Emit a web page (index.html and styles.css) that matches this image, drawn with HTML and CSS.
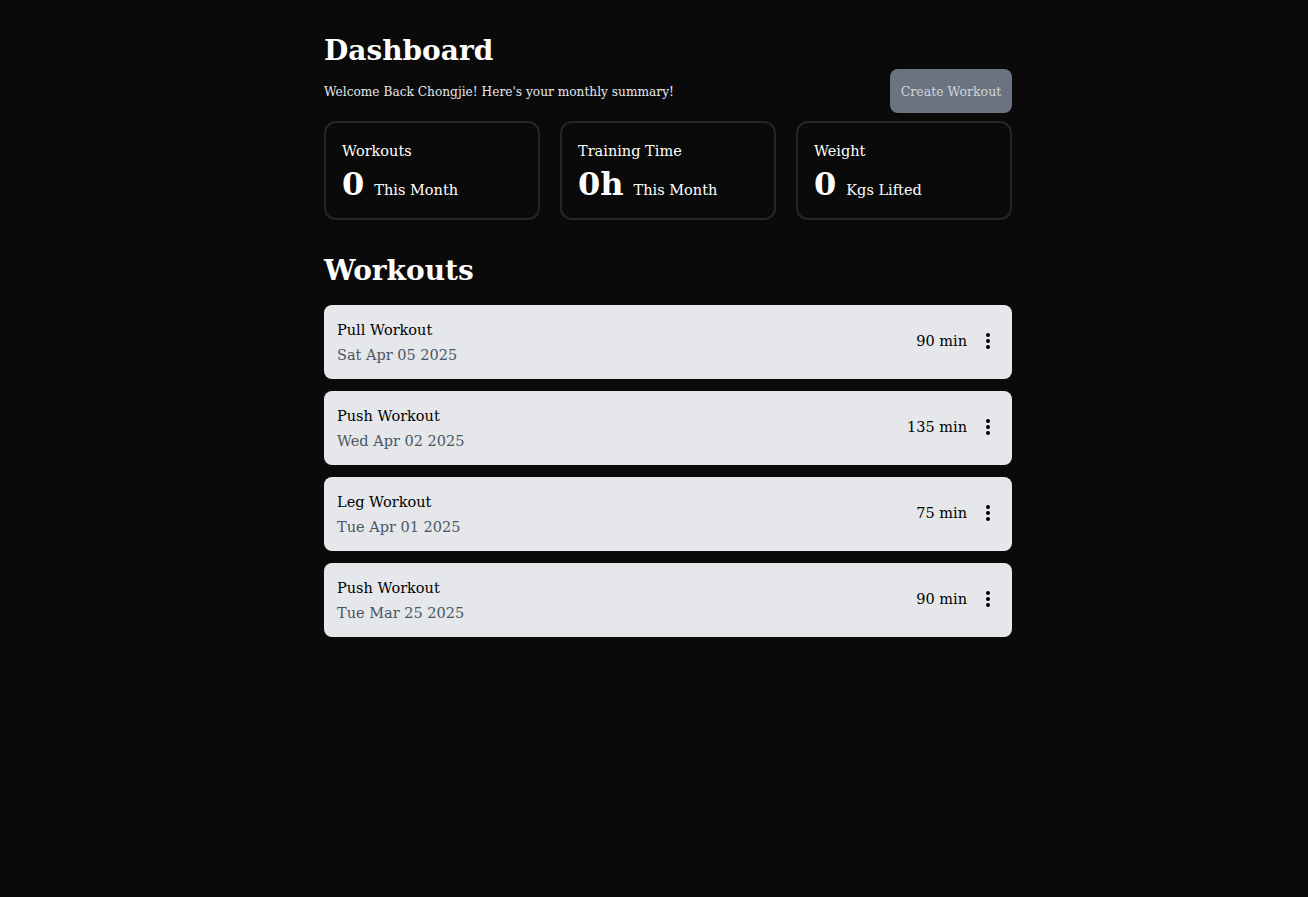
FILE: index.html
```html
<!DOCTYPE html>
<html lang="en">
<head>
<meta charset="utf-8">
<title>Dashboard</title>
<link rel="stylesheet" href="styles.css">
</head>
<body>
<div class="page">
  <main class="main">
    <h1 class="title">Dashboard</h1>
    <div class="subbar">
      <p class="welcome">Welcome Back Chongjie! Here's your monthly summary!</p>
      <button class="create-btn">Create Workout</button>
    </div>
    <section class="stats">
      <div class="stat-card">
        <div class="stat-label">Workouts</div>
        <div class="stat-value"><span class="stat-num">0</span><span class="stat-unit">This Month</span></div>
      </div>
      <div class="stat-card">
        <div class="stat-label">Training Time</div>
        <div class="stat-value"><span class="stat-num">0h</span><span class="stat-unit">This Month</span></div>
      </div>
      <div class="stat-card">
        <div class="stat-label">Weight</div>
        <div class="stat-value"><span class="stat-num">0</span><span class="stat-unit">Kgs Lifted</span></div>
      </div>
    </section>
    <h2 class="section-title">Workouts</h2>
    <ul class="workout-list">
      <li class="workout">
        <div class="workout-info"><div class="workout-name">Pull Workout</div><div class="workout-date">Sat Apr 05 2025</div></div>
        <div class="workout-side"><span class="workout-min">90 min</span><svg class="dots" viewBox="0 0 4 16" width="4" height="16"><circle cx="2" cy="2" r="2"/><circle cx="2" cy="8" r="2"/><circle cx="2" cy="14" r="2"/></svg></div>
      </li>
      <li class="workout">
        <div class="workout-info"><div class="workout-name">Push Workout</div><div class="workout-date">Wed Apr 02 2025</div></div>
        <div class="workout-side"><span class="workout-min">135 min</span><svg class="dots" viewBox="0 0 4 16" width="4" height="16"><circle cx="2" cy="2" r="2"/><circle cx="2" cy="8" r="2"/><circle cx="2" cy="14" r="2"/></svg></div>
      </li>
      <li class="workout">
        <div class="workout-info"><div class="workout-name">Leg Workout</div><div class="workout-date">Tue Apr 01 2025</div></div>
        <div class="workout-side"><span class="workout-min">75 min</span><svg class="dots" viewBox="0 0 4 16" width="4" height="16"><circle cx="2" cy="2" r="2"/><circle cx="2" cy="8" r="2"/><circle cx="2" cy="14" r="2"/></svg></div>
      </li>
      <li class="workout">
        <div class="workout-info"><div class="workout-name">Push Workout</div><div class="workout-date">Tue Mar 25 2025</div></div>
        <div class="workout-side"><span class="workout-min">90 min</span><svg class="dots" viewBox="0 0 4 16" width="4" height="16"><circle cx="2" cy="2" r="2"/><circle cx="2" cy="8" r="2"/><circle cx="2" cy="14" r="2"/></svg></div>
      </li>
    </ul>
  </main>
</div>
</body>
</html>
```

FILE: styles.css
```css
* { box-sizing: border-box; }
html, body {
  margin: 0;
  padding: 0;
  background: #0a0a0a;
  color: #ffffff;
  font-family: Georgia, "DejaVu Serif", serif;
  font-variant-numeric: oldstyle-nums;
}
.page {
  display: flex;
  justify-content: center;
  padding-left: 28px;
  padding-top: 33px;
}
.main {
  width: 688px;
}
.title {
  margin: 0;
  font-size: 28px;
  line-height: 36px;
  font-weight: bold;
}
.subbar {
  display: flex;
  justify-content: space-between;
  align-items: center;
  margin-top: 0;
}
.welcome {
  margin: 0;
  padding-top: 2px;
  font-size: 12.2px;
  color: #e5e7eb;
}
.create-btn {
  height: 44px;
  width: 122px;
  border: none;
  border-radius: 8px;
  background: #6b7280;
  color: #d1d5db;
  font-family: inherit;
  font-size: 12.5px;
  padding: 0;
}
.stats {
  display: grid;
  grid-template-columns: repeat(3, 1fr);
  gap: 20px;
  margin-top: 8px;
}
.stat-card {
  height: 99px;
  border: 2px solid #262626;
  border-radius: 12px;
  padding: 17px 16px;
}
.stat-label {
  font-size: 14.5px;
  line-height: 22px;
}
.stat-value {
  display: flex;
  align-items: baseline;
  gap: 10px;
  margin-top: 4px;
}
.stat-num {
  font-size: 32px;
  font-weight: bold;
  line-height: 36px;
}
.stat-unit {
  font-size: 14.5px;
}
.section-title {
  margin: 33px 0 0;
  font-size: 28px;
  line-height: 36px;
  font-weight: bold;
}
.workout-list {
  list-style: none;
  margin: 16px 0 0;
  padding: 0;
  display: flex;
  flex-direction: column;
  gap: 12px;
}
.workout {
  height: 74px;
  background: #e5e7eb;
  border-radius: 8px;
  padding: 1px 22px 0 13px;
  display: flex;
  align-items: center;
  justify-content: space-between;
}
.workout-name {
  color: #000000;
  font-size: 14.5px;
  line-height: 25px;
}
.workout-date {
  color: #4b5563;
  font-size: 14.5px;
  line-height: 25px;
}
.workout-side {
  display: flex;
  align-items: center;
  gap: 19px;
  color: #000000;
  padding-bottom: 3px;
}
.workout-min {
  font-size: 14.5px;
}
.dots {
  fill: #000000;
  display: block;
}
```
